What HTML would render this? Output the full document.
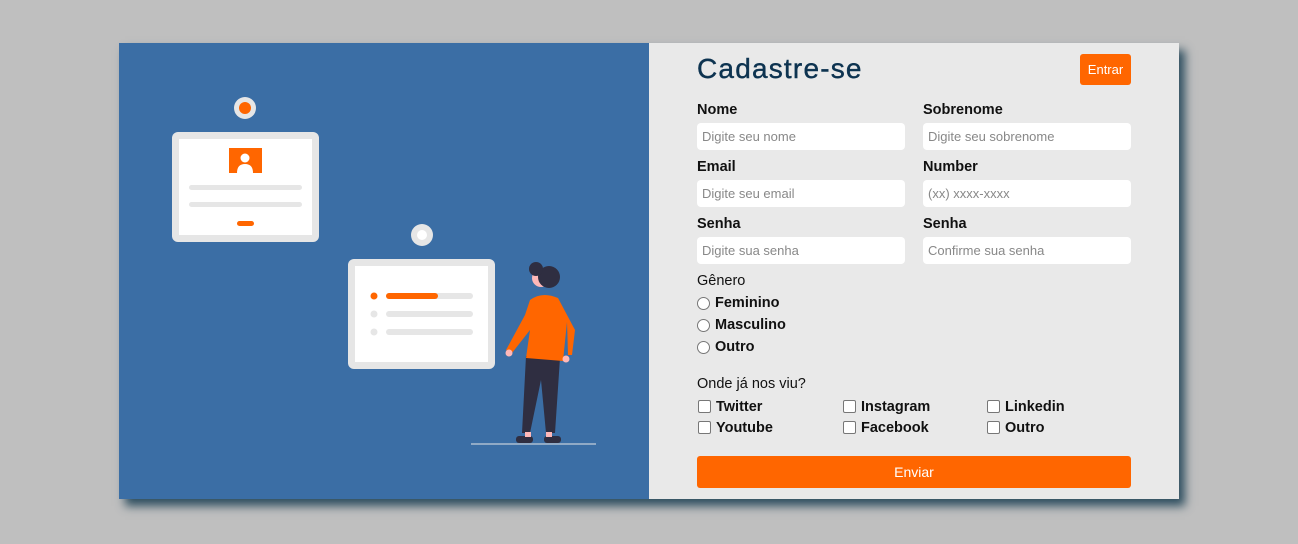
<!DOCTYPE html>
<html><head><meta charset="utf-8"><style>
*{box-sizing:border-box;margin:0;padding:0}
body{width:1298px;height:544px;background:#bfbfbf;position:relative;overflow:hidden;font-family:"Liberation Sans",sans-serif}
.card{position:absolute;left:119px;top:43px;width:1060px;height:456px;box-shadow:6px 7px 9px #2f4f60;background:#e9e9e9}
.left{position:absolute;left:0;top:0;width:530px;height:456px;background:#3b6ea5}
.a{position:absolute}
h1{position:absolute;left:697px;top:53px;font-size:28px;font-weight:normal;color:#0d3350;letter-spacing:1.2px;-webkit-text-stroke:0.4px #0d3350}
.btn{position:absolute;background:#ff6600;color:#fff;border-radius:3px;font-size:14px;text-align:center}
.lbl{position:absolute;font-size:14.5px;font-weight:bold;color:#111}
.in{position:absolute;width:208px;height:27px;background:#fff;border-radius:4px;font-size:13px;color:#888;padding:6px 5px}
.opt{position:absolute;font-size:14.5px;font-weight:bold;color:#111}
.r{display:inline-block;width:13px;height:13px;border:1px solid #777;border-radius:50%;background:#fff;vertical-align:-3px;margin-right:5px}
.c{display:inline-block;width:13px;height:13px;border:1px solid #777;border-radius:2px;background:#fff;vertical-align:-2px;margin-right:5px}
</style></head><body>
<div class="card"><div class="left"></div></div>
<svg class="a" style="left:119px;top:43px" width="530" height="456" viewBox="119 43 530 456">
<circle cx="245" cy="108" r="11" fill="#e6e6e6"/><circle cx="245" cy="108" r="6" fill="#ff6600"/>
<rect x="172" y="132" width="147" height="110" rx="6" fill="#e6e6e6"/>
<rect x="179" y="139" width="133" height="96" fill="#fff"/>
<rect x="229" y="148" width="33" height="25" fill="#ff6600"/>
<circle cx="245" cy="158" r="4.5" fill="#fff"/><path d="M237 173 q0-9 8-9 q8 0 8 9z" fill="#fff"/>
<rect x="189" y="185" width="113" height="5" rx="2.5" fill="#e6e6e6"/>
<rect x="189" y="202" width="113" height="5" rx="2.5" fill="#e6e6e6"/>
<rect x="237" y="221" width="17" height="5" rx="2.5" fill="#ff6600"/>
<circle cx="422" cy="235" r="11" fill="#e6e6e6"/><circle cx="422" cy="235" r="5" fill="#fff"/>
<rect x="348" y="259" width="147" height="110" rx="6" fill="#e6e6e6"/>
<rect x="355" y="266" width="133" height="96" fill="#fff"/>
<circle cx="374" cy="296" r="3.5" fill="#ff6600"/><rect x="386" y="293" width="87" height="6" rx="3" fill="#e6e6e6"/><rect x="386" y="293" width="52" height="6" rx="3" fill="#ff6600"/>
<circle cx="374" cy="314" r="3.5" fill="#e6e6e6"/><rect x="386" y="311" width="87" height="6" rx="3" fill="#e6e6e6"/>
<circle cx="374" cy="332" r="3.5" fill="#e6e6e6"/><rect x="386" y="329" width="87" height="6" rx="3" fill="#e6e6e6"/>
<line x1="471" y1="444" x2="596" y2="444" stroke="#e6e6e6" stroke-width="1"/>
<path d="M526 356 L522 433 L530 433 L541 380 L546 433 L555 433 L560 358z" fill="#2f2e41"/>
<rect x="516" y="436" width="17" height="7" rx="3" fill="#2f2e41"/><rect x="544" y="436" width="17" height="7" rx="3" fill="#2f2e41"/>
<rect x="525" y="432" width="6" height="5" fill="#ffb8b8"/><rect x="546" y="432" width="6" height="5" fill="#ffb8b8"/>
<circle cx="541" cy="278" r="9" fill="#ffb8b8"/>
<circle cx="549" cy="277" r="11" fill="#2f2e41"/><circle cx="536" cy="269" r="7" fill="#2f2e41"/>
<path d="M530 300 Q542 291 558 298 L575 330 L572 355 L568 355 L567 322 L563 361 L526 358 L530 330 L512 353 L506 350 L525 315z" fill="#ff6600"/>
<circle cx="509" cy="353" r="3.5" fill="#ffb8b8"/><circle cx="566" cy="359" r="3.5" fill="#ffb8b8"/>
</svg>
<h1>Cadastre-se</h1>
<div class="btn" style="left:1080px;top:54px;width:51px;height:31px;line-height:31px;font-size:13px">Entrar</div>
<div class="lbl" style="left:697px;top:102px">Nome</div><div class="lbl" style="left:923px;top:102px">Sobrenome</div>
<div class="in" style="left:697px;top:123px">Digite seu nome</div><div class="in" style="left:923px;top:123px">Digite seu sobrenome</div>
<div class="lbl" style="left:697px;top:159px">Email</div><div class="lbl" style="left:923px;top:159px">Number</div>
<div class="in" style="left:697px;top:180px">Digite seu email</div><div class="in" style="left:923px;top:180px">(xx) xxxx-xxxx</div>
<div class="lbl" style="left:697px;top:216px">Senha</div><div class="lbl" style="left:923px;top:216px">Senha</div>
<div class="in" style="left:697px;top:237px">Digite sua senha</div><div class="in" style="left:923px;top:237px">Confirme sua senha</div>
<div class="opt" style="left:697px;top:273px;font-weight:normal;font-size:14.5px">Gênero</div>
<div class="opt" style="left:697px;top:295px"><span class="r"></span>Feminino</div>
<div class="opt" style="left:697px;top:317px"><span class="r"></span>Masculino</div>
<div class="opt" style="left:697px;top:339px"><span class="r"></span>Outro</div>
<div class="opt" style="left:697px;top:376px;font-weight:normal;font-size:14.5px">Onde já nos viu?</div>
<div class="opt" style="left:698px;top:399px"><span class="c"></span>Twitter</div>
<div class="opt" style="left:843px;top:399px"><span class="c"></span>Instagram</div>
<div class="opt" style="left:987px;top:399px"><span class="c"></span>Linkedin</div>
<div class="opt" style="left:698px;top:420px"><span class="c"></span>Youtube</div>
<div class="opt" style="left:843px;top:420px"><span class="c"></span>Facebook</div>
<div class="opt" style="left:987px;top:420px"><span class="c"></span>Outro</div>
<div class="btn" style="left:697px;top:456px;width:434px;height:32px;line-height:32px">Enviar</div>
</body></html>
